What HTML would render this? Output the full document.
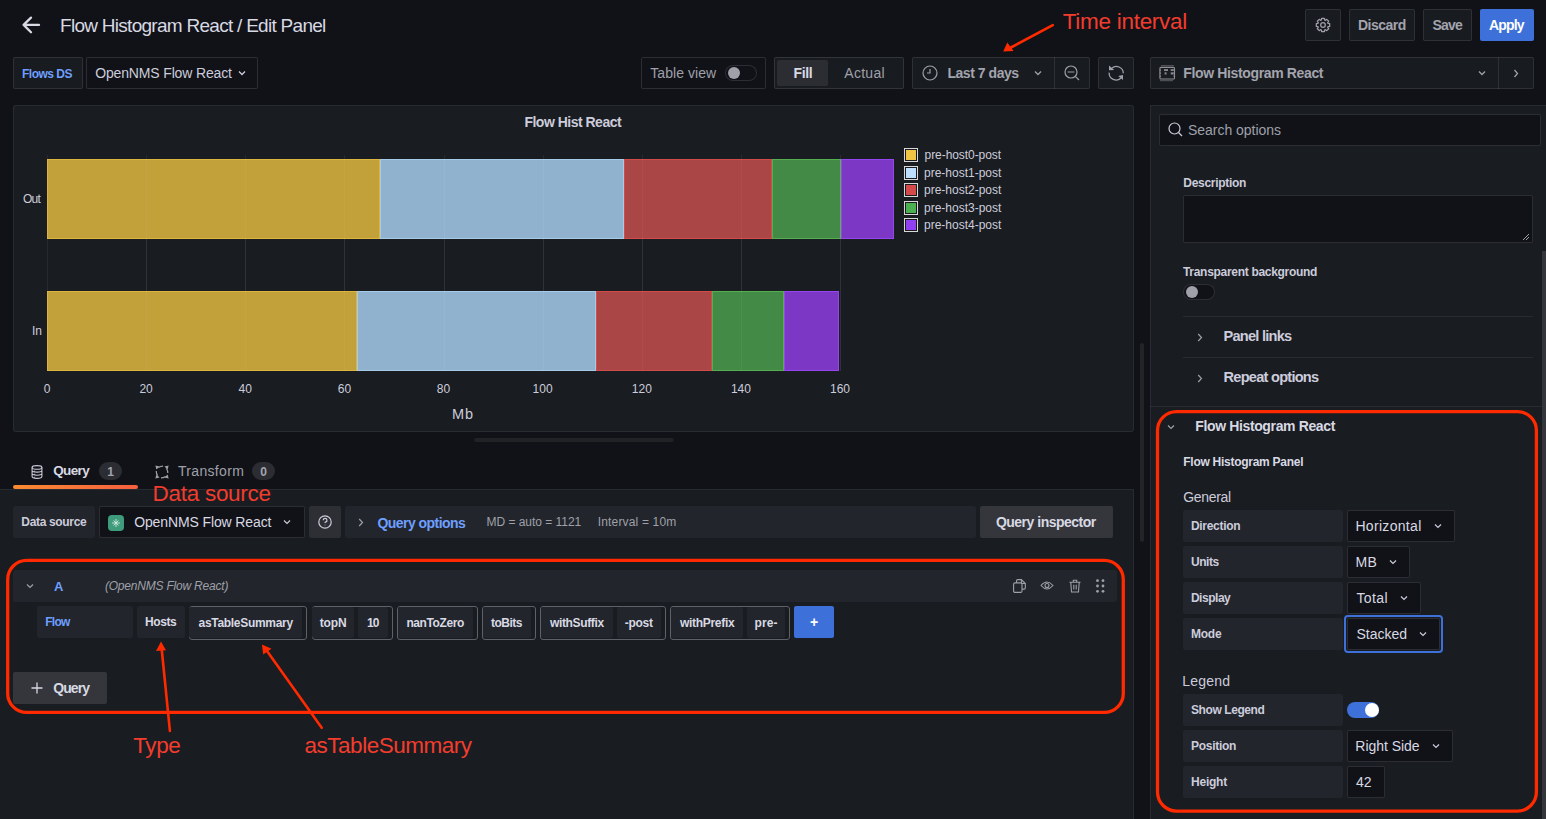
<!DOCTYPE html>
<html><head><meta charset="utf-8">
<style>
*{box-sizing:border-box;margin:0;padding:0}
html,body{width:1546px;height:819px;overflow:hidden;background:#111217;font-family:"Liberation Sans",sans-serif;color:#ccccdc}
.a{position:absolute}
.t{position:absolute;white-space:nowrap;line-height:1}
.b{font-weight:bold}
.btn{position:absolute;border:1px solid rgba(204,204,220,0.12);border-radius:2px;background:#181b1f}
.inp{position:absolute;border:1px solid rgba(204,204,220,0.15);border-radius:2px;background:#111217}
.lbl{position:absolute;background:#22252b;border-radius:2px}
svg{position:absolute;overflow:visible}
.red{color:#ff3b1f}
</style></head><body>

<!-- ===== HEADER ===== -->
<svg style="left:22px;top:17px" width="18" height="16" viewBox="0 0 18 16"><path d="M9 0.6 L1.6 7.9 L9 15.2 M1.6 7.9 H17" fill="none" stroke="#d8d9e3" stroke-width="2.3" stroke-linecap="round" stroke-linejoin="round"/></svg>
<div class="t" style="left:60.0px;top:16px;font-size:19px;color:#d8d9e3;letter-spacing:-0.72px">Flow Histogram React / Edit Panel</div>

<div class="btn" style="left:1305px;top:9px;width:36px;height:32px"></div>
<svg style="left:1315px;top:16.8px" width="16" height="16" viewBox="0 0 16 16"><path d="M6.43 2.94 L6.61 1.34 L9.39 1.34 L9.57 2.94 L10.47 3.31 L11.72 2.32 L13.68 4.28 L12.69 5.53 L13.06 6.43 L14.66 6.61 L14.66 9.39 L13.06 9.57 L12.69 10.47 L13.68 11.72 L11.72 13.68 L10.47 12.69 L9.57 13.06 L9.39 14.66 L6.61 14.66 L6.43 13.06 L5.53 12.69 L4.28 13.68 L2.32 11.72 L3.31 10.47 L2.94 9.57 L1.34 9.39 L1.34 6.61 L2.94 6.43 L3.31 5.53 L2.32 4.28 L4.28 2.32 L5.53 3.31Z" fill="none" stroke="#9fa0aa" stroke-width="1.25" stroke-linejoin="round"/><circle cx="8" cy="8" r="2.3" fill="none" stroke="#9fa0aa" stroke-width="1.25"/></svg>
<div class="btn" style="left:1349px;top:9px;width:66px;height:32px"></div>
<div class="t b" style="left:1358.0px;top:18px;font-size:14px;color:#a3a4ae;letter-spacing:-0.50px">Discard</div>
<div class="btn" style="left:1423px;top:9px;width:49px;height:32px"></div>
<div class="t b" style="left:1432.5px;top:18px;font-size:14px;color:#a3a4ae;letter-spacing:-0.80px">Save</div>
<div class="a" style="left:1480px;top:9px;width:54px;height:32px;background:#3d71d9;border-radius:2px"></div>
<div class="t b" style="left:1489.0px;top:18px;font-size:14px;color:#fff;letter-spacing:-0.85px">Apply</div>

<!-- ===== TOOLBAR ROW ===== -->
<div class="btn" style="left:13px;top:57px;width:70px;height:32px"></div>
<div class="t b" style="left:22.0px;top:68px;font-size:12px;color:#6e9fff;letter-spacing:-0.50px">Flows DS</div>
<div class="inp" style="left:86px;top:57px;width:172px;height:32px;border-color:rgba(204,204,220,0.15)"></div>
<div class="t" style="left:95.2px;top:66px;font-size:14px;color:#ccccdc;letter-spacing:-0.15px">OpenNMS Flow React</div>
<svg style="left:238px;top:70px" width="8" height="6" viewBox="0 0 8 6"><path d="M1 1.5 L4 4.5 L7 1.5" fill="none" stroke="#ccccdc" stroke-width="1.3"/></svg>

<div class="inp" style="left:641px;top:57px;width:125px;height:32px"></div>
<div class="t" style="left:650.3px;top:66px;font-size:14px;color:#9fa0aa;letter-spacing:0.05px">Table view</div>
<div class="a" style="left:725px;top:65px;width:32px;height:16px;border:1px solid rgba(204,204,220,0.15);border-radius:8px;background:#111217"></div>
<div class="a" style="left:728px;top:67px;width:12px;height:12px;border-radius:6px;background:#9fa0aa"></div>

<div class="inp" style="left:774px;top:57px;width:130px;height:32px;background:#181b1f"></div>
<div class="a" style="left:777px;top:60px;width:51px;height:26px;background:#2c2d33;border-radius:2px"></div>
<div class="t b" style="left:793.6px;top:66px;font-size:14px;color:#d8d9e3;letter-spacing:-0.41px">Fill</div>
<div class="t" style="left:844.3px;top:66px;font-size:14px;color:#9fa0aa;letter-spacing:0.28px">Actual</div>

<div class="btn" style="left:912px;top:57px;width:178px;height:32px"></div>
<div class="a" style="left:1054px;top:57px;width:1px;height:32px;background:rgba(204,204,220,0.12)"></div>
<svg style="left:922px;top:65px" width="16" height="16" viewBox="0 0 16 16"><circle cx="8" cy="8" r="7" fill="none" stroke="#9fa0aa" stroke-width="1.2"/><path d="M8 4 V8 H5" fill="none" stroke="#9fa0aa" stroke-width="1.2"/></svg>
<div class="t b" style="left:947.4px;top:66px;font-size:14px;color:#a3a4ae;letter-spacing:-0.45px">Last 7 days</div>
<svg style="left:1034px;top:70px" width="8" height="6" viewBox="0 0 8 6"><path d="M1 1.5 L4 4.5 L7 1.5" fill="none" stroke="#9fa0aa" stroke-width="1.3"/></svg>
<svg style="left:1064px;top:65px" width="16" height="16" viewBox="0 0 16 16"><circle cx="7" cy="7" r="6" fill="none" stroke="#9fa0aa" stroke-width="1.2"/><path d="M3.6 7 H10.4 M11.3 11.3 L15 15" fill="none" stroke="#9fa0aa" stroke-width="1.2"/></svg>
<div class="btn" style="left:1098px;top:57px;width:36px;height:32px"></div>
<svg style="left:1108px;top:65px" width="16" height="16" viewBox="0 0 16 16"><path d="M3.6 3.4 A6.9 6.9 0 0 1 15.3 8.3 M1.2 7.6 A6.9 6.9 0 0 0 13 13" fill="none" stroke="#9fa0aa" stroke-width="1.3"/><polygon points="1,0.5 6.2,4.9 1,5.3" fill="#9fa0aa"/><polygon points="10.2,11 15,15.1 15,10.1" fill="#9fa0aa"/></svg>

<div class="btn" style="left:1150px;top:57px;width:384px;height:32px"></div>
<div class="a" style="left:1498px;top:57px;width:1px;height:32px;background:rgba(204,204,220,0.12)"></div>
<svg style="left:1159px;top:65px" width="16" height="17" viewBox="0 0 16 17"><path d="M2 0.7 H14.8 M1 15.6 H14" stroke="#4d4e54" stroke-width="1.3"/><rect x="0.9" y="2.4" width="14.6" height="11.6" rx="1" fill="none" stroke="#8e8f97" stroke-width="1.1"/><path d="M1.3 4.5 v1.5 M1.3 7.5 v1.5 M1.3 10.5 v1.5 M15 4.5 v1.5 M15 7.5 v1.5 M15 10.5 v1.5" stroke="#8e8f97" stroke-width="0.9"/><rect x="5" y="4.1" width="4" height="1.9" fill="#84858c"/><rect x="11.7" y="4.1" width="3" height="1.9" fill="#84858c"/><rect x="5.6" y="7.3" width="2" height="2.2" fill="#84858c"/><rect x="11.7" y="7.3" width="3" height="2.2" fill="#84858c"/></svg>
<div class="t b" style="left:1183.3px;top:66px;font-size:14px;color:#a3a4ae;letter-spacing:-0.36px">Flow Histogram React</div>
<svg style="left:1478px;top:70px" width="8" height="6" viewBox="0 0 8 6"><path d="M1 1.5 L4 4.5 L7 1.5" fill="none" stroke="#9fa0aa" stroke-width="1.3"/></svg>
<svg style="left:1513px;top:69px" width="6" height="9" viewBox="0 0 6 9"><path d="M1.5 1 L4.5 4.5 L1.5 8" fill="none" stroke="#9fa0aa" stroke-width="1.3"/></svg>


<!-- ===== CHART PANEL ===== -->
<div class="a" style="left:13px;top:105px;width:1121px;height:327px;background:#191c20;border:1px solid rgba(204,204,220,0.09);border-radius:3px"></div>
<div class="t b" style="left:524.4px;top:115px;font-size:14px;color:#ccccdc;letter-spacing:-0.50px">Flow Hist React</div>
<!-- grid -->
<div id="grid"></div>
<div class="a" style="left:47.0px;top:155px;width:1px;height:216px;background:rgba(204,204,220,0.08)"></div><div class="a" style="left:146.1px;top:155px;width:1px;height:216px;background:rgba(204,204,220,0.08)"></div><div class="a" style="left:245.2px;top:155px;width:1px;height:216px;background:rgba(204,204,220,0.08)"></div><div class="a" style="left:344.4px;top:155px;width:1px;height:216px;background:rgba(204,204,220,0.08)"></div><div class="a" style="left:443.5px;top:155px;width:1px;height:216px;background:rgba(204,204,220,0.08)"></div><div class="a" style="left:542.6px;top:155px;width:1px;height:216px;background:rgba(204,204,220,0.08)"></div><div class="a" style="left:641.8px;top:155px;width:1px;height:216px;background:rgba(204,204,220,0.08)"></div><div class="a" style="left:740.9px;top:155px;width:1px;height:216px;background:rgba(204,204,220,0.08)"></div><div class="a" style="left:840.0px;top:155px;width:1px;height:216px;background:rgba(204,204,220,0.08)"></div>
<!-- bars -->
<div class="a" style="left:47px;top:159px;width:333px;height:80px;background:#c2a03a;box-shadow:inset 0 0 0 1px #dcb440"></div><div class="a" style="left:380px;top:159px;width:244px;height:80px;background:#91b2ce;box-shadow:inset 0 0 0 1px #a6cbe8"></div><div class="a" style="left:624px;top:159px;width:147.5px;height:80px;background:#aa4646;box-shadow:inset 0 0 0 1px #d24b4b"></div><div class="a" style="left:771.5px;top:159px;width:69.5px;height:80px;background:#448a47;box-shadow:inset 0 0 0 1px #55af50"></div><div class="a" style="left:841px;top:159px;width:53px;height:80px;background:#7c38c4;box-shadow:inset 0 0 0 1px #9646f0"></div><div class="a" style="left:47px;top:291px;width:310px;height:80px;background:#c2a03a;box-shadow:inset 0 0 0 1px #dcb440"></div><div class="a" style="left:357px;top:291px;width:239px;height:80px;background:#91b2ce;box-shadow:inset 0 0 0 1px #a6cbe8"></div><div class="a" style="left:596px;top:291px;width:116px;height:80px;background:#aa4646;box-shadow:inset 0 0 0 1px #d24b4b"></div><div class="a" style="left:712px;top:291px;width:72px;height:80px;background:#448a47;box-shadow:inset 0 0 0 1px #55af50"></div><div class="a" style="left:784px;top:291px;width:55px;height:80px;background:#7c38c4;box-shadow:inset 0 0 0 1px #9646f0"></div>
<div class="a" style="left:146.1px;top:159px;width:1px;height:212px;background:rgba(255,255,255,0.045)"></div><div class="a" style="left:245.2px;top:159px;width:1px;height:212px;background:rgba(255,255,255,0.045)"></div><div class="a" style="left:344.4px;top:159px;width:1px;height:212px;background:rgba(255,255,255,0.045)"></div><div class="a" style="left:443.5px;top:159px;width:1px;height:212px;background:rgba(255,255,255,0.045)"></div><div class="a" style="left:542.6px;top:159px;width:1px;height:212px;background:rgba(255,255,255,0.045)"></div><div class="a" style="left:641.8px;top:159px;width:1px;height:212px;background:rgba(255,255,255,0.045)"></div><div class="a" style="left:740.9px;top:159px;width:1px;height:212px;background:rgba(255,255,255,0.045)"></div><div class="a" style="left:840.0px;top:159px;width:1px;height:212px;background:rgba(255,255,255,0.045)"></div>
<div class="t" style="left:23.0px;top:193px;font-size:12px;color:#ccccdc;letter-spacing:-0.80px">Out</div>
<div class="t" style="left:32px;top:325px;font-size:12px;color:#ccccdc">In</div>
<div class="t" style="left:17.0px;width:60px;text-align:center;top:383px;font-size:12px;color:#ccccdc">0</div><div class="t" style="left:116.1px;width:60px;text-align:center;top:383px;font-size:12px;color:#ccccdc">20</div><div class="t" style="left:215.2px;width:60px;text-align:center;top:383px;font-size:12px;color:#ccccdc">40</div><div class="t" style="left:314.4px;width:60px;text-align:center;top:383px;font-size:12px;color:#ccccdc">60</div><div class="t" style="left:413.5px;width:60px;text-align:center;top:383px;font-size:12px;color:#ccccdc">80</div><div class="t" style="left:512.6px;width:60px;text-align:center;top:383px;font-size:12px;color:#ccccdc">100</div><div class="t" style="left:611.8px;width:60px;text-align:center;top:383px;font-size:12px;color:#ccccdc">120</div><div class="t" style="left:710.9px;width:60px;text-align:center;top:383px;font-size:12px;color:#ccccdc">140</div><div class="t" style="left:810.0px;width:60px;text-align:center;top:383px;font-size:12px;color:#ccccdc">160</div>
<div class="t" style="left:452.0px;top:407px;font-size:14.5px;color:#ccccdc;letter-spacing:0.92px">Mb</div>
<div class="a" style="left:904px;top:148.0px;width:14px;height:14px;border:1px solid #d8d8d8;background:#f2c444;box-shadow:inset 0 0 0 1px #181b1f"></div><div class="t" style="left:924.6px;top:149.0px;font-size:12px;color:#ccccdc;letter-spacing:-0.07px">pre-host0-post</div><div class="a" style="left:904px;top:165.5px;width:14px;height:14px;border:1px solid #d8d8d8;background:#bfdfff;box-shadow:inset 0 0 0 1px #181b1f"></div><div class="t" style="left:924px;top:166.5px;font-size:12px;color:#ccccdc">pre-host1-post</div><div class="a" style="left:904px;top:183.0px;width:14px;height:14px;border:1px solid #d8d8d8;background:#d44a4a;box-shadow:inset 0 0 0 1px #181b1f"></div><div class="t" style="left:924px;top:184.0px;font-size:12px;color:#ccccdc">pre-host2-post</div><div class="a" style="left:904px;top:200.5px;width:14px;height:14px;border:1px solid #d8d8d8;background:#4caf50;box-shadow:inset 0 0 0 1px #181b1f"></div><div class="t" style="left:924px;top:201.5px;font-size:12px;color:#ccccdc">pre-host3-post</div><div class="a" style="left:904px;top:218.0px;width:14px;height:14px;border:1px solid #d8d8d8;background:#9040f0;box-shadow:inset 0 0 0 1px #181b1f"></div><div class="t" style="left:924px;top:219.0px;font-size:12px;color:#ccccdc">pre-host4-post</div>
<div class="a" style="left:474px;top:438px;width:200px;height:4px;border-radius:2px;background:#202226"></div>


<!-- ===== QUERY TABS ===== -->
<svg style="left:31px;top:465px" width="12" height="14" viewBox="0 0 12 14"><ellipse cx="6" cy="2.4" rx="4.9" ry="1.8" fill="none" stroke="#ccccdc" stroke-width="1.1"/><path d="M1.1 2.4 V11.6 Q1.1 13.4 6 13.4 Q10.9 13.4 10.9 11.6 V2.4 M1.1 5.5 Q1.1 7.1 6 7.1 Q10.9 7.1 10.9 5.5 M1.1 8.6 Q1.1 10.2 6 10.2 Q10.9 10.2 10.9 8.6" fill="none" stroke="#ccccdc" stroke-width="1.1"/><path d="M2.8 6.2 h1.4 M2.8 9.3 h1.4 M2.8 12.3 h1.4" stroke="#ccccdc" stroke-width="0.9"/></svg>
<div class="t b" style="left:53.2px;top:463.5px;font-size:13.5px;color:#d8d9e3;letter-spacing:-0.63px">Query</div>
<div class="a" style="left:99px;top:462px;width:23px;height:18px;border-radius:9px;background:#2c2d33"></div>
<div class="t b" style="left:99px;top:465.5px;width:23px;text-align:center;font-size:12px;color:#a3a4ae">1</div>
<svg style="left:155px;top:465px" width="14" height="14" viewBox="0 0 14 14"><g transform="rotate(0 7 7)"><polygon points="0.4,0.4 4.6,1.4 1.4,4.6" fill="#9fa0aa"/><path d="M3.5 2.6 Q5.5 1.2 8 1.2" fill="none" stroke="#9fa0aa" stroke-width="1.2"/></g><g transform="rotate(90 7 7)"><polygon points="0.4,0.4 4.6,1.4 1.4,4.6" fill="#9fa0aa"/><path d="M3.5 2.6 Q5.5 1.2 8 1.2" fill="none" stroke="#9fa0aa" stroke-width="1.2"/></g><g transform="rotate(180 7 7)"><polygon points="0.4,0.4 4.6,1.4 1.4,4.6" fill="#9fa0aa"/><path d="M3.5 2.6 Q5.5 1.2 8 1.2" fill="none" stroke="#9fa0aa" stroke-width="1.2"/></g><g transform="rotate(270 7 7)"><polygon points="0.4,0.4 4.6,1.4 1.4,4.6" fill="#9fa0aa"/><path d="M3.5 2.6 Q5.5 1.2 8 1.2" fill="none" stroke="#9fa0aa" stroke-width="1.2"/></g></svg>
<div class="t" style="left:178.0px;top:464px;font-size:14px;color:#9fa0aa;letter-spacing:0.32px">Transform</div>
<div class="a" style="left:252px;top:462px;width:23px;height:18px;border-radius:9px;background:#2c2d33"></div>
<div class="t b" style="left:252px;top:465.5px;width:23px;text-align:center;font-size:12px;color:#a3a4ae">0</div>
<div class="a" style="left:13px;top:485px;width:125px;height:4px;border-radius:2px;background:linear-gradient(90deg,#f98b31,#f55f3e)"></div>

<!-- ===== QUERY EDITOR AREA ===== -->
<div class="a" style="left:0;top:489px;width:1134px;height:340px;background:#191c20;border-top:1px solid rgba(204,204,220,0.09);border-right:1px solid rgba(204,204,220,0.09)"></div>
<div class="lbl" style="left:13px;top:506px;width:82px;height:32px"></div>
<div class="t b" style="left:21.3px;top:516px;font-size:12px;color:#ccccdc;letter-spacing:-0.33px">Data source</div>
<div class="inp" style="left:99px;top:506px;width:206px;height:32px"></div>
<div class="a" style="left:108px;top:515px;width:16px;height:16px;border-radius:4px;background:#3e9b7b"></div>
<svg style="left:108px;top:515px" width="16" height="16" viewBox="0 0 16 16"><path d="M4 8 H12 M8 4 V12 M5.5 5.5 L10.5 10.5 M10.5 5.5 L5.5 10.5" stroke="#cfe9df" stroke-width="0.9"/></svg>
<div class="t" style="left:134.2px;top:515px;font-size:14px;color:#d8d9e3;letter-spacing:-0.12px">OpenNMS Flow React</div>
<svg style="left:283px;top:519px" width="8" height="6" viewBox="0 0 8 6"><path d="M1 1.5 L4 4.5 L7 1.5" fill="none" stroke="#ccccdc" stroke-width="1.2"/></svg>
<div class="a" style="left:309px;top:506px;width:32px;height:32px;border-radius:2px;background:#2d2f34"></div>
<svg style="left:317px;top:514px" width="16" height="16" viewBox="0 0 16 16"><circle cx="8" cy="8" r="6.2" fill="none" stroke="#ccccdc" stroke-width="1.2"/><path d="M6.2 6.3 A1.9 1.9 0 1 1 8.4 8.1 Q8 8.3 8 9 M8 10.8 V11.3" fill="none" stroke="#ccccdc" stroke-width="1.2"/></svg>
<div class="lbl" style="left:345px;top:506px;width:631px;height:32px"></div>
<svg style="left:358px;top:518px" width="6" height="9" viewBox="0 0 6 9"><path d="M1.2 1 L4.5 4.5 L1.2 8" fill="none" stroke="#9fa0aa" stroke-width="1.2"/></svg>
<div class="t b" style="left:377.4px;top:515.7px;font-size:14px;color:#6e9fff;letter-spacing:-0.54px">Query options</div>
<div class="t" style="left:486.5px;top:516px;font-size:12px;color:#9fa0aa;letter-spacing:-0.03px">MD = auto = 1121</div>
<div class="t" style="left:597.8px;top:516px;font-size:12px;color:#9fa0aa;letter-spacing:0.16px">Interval = 10m</div>
<div class="a" style="left:980px;top:506px;width:133px;height:32px;border-radius:2px;background:#34363c"></div>
<div class="t b" style="left:995.9px;top:515px;font-size:14px;color:#d8d9e3;letter-spacing:-0.50px">Query inspector</div>
<div class="a" style="left:1140px;top:343px;width:4px;height:199px;border-radius:2px;background:#222428"></div>

<!-- query row -->
<div class="lbl" style="left:13px;top:570px;width:1104px;height:32px"></div>
<svg style="left:26px;top:583px" width="8" height="6" viewBox="0 0 8 6"><path d="M1 1.5 L4 4.5 L7 1.5" fill="none" stroke="#9fa0aa" stroke-width="1.2"/></svg>
<div class="t b" style="left:54px;top:580px;font-size:13px;color:#6e9fff">A</div>
<div class="t" style="left:104.9px;top:580px;font-size:12px;font-style:italic;color:#9fa0aa;letter-spacing:-0.20px">(OpenNMS Flow React)</div>
<svg style="left:1013px;top:579px" width="13" height="14" viewBox="0 0 13 14"><path d="M3.6 3.9 V1.7 Q3.6 0.6 4.7 0.6 H8.4 L12.3 4.5 V9 Q12.3 10.1 11.2 10.1 H9" fill="none" stroke="#9fa0aa" stroke-width="1.1" stroke-linejoin="round"/><path d="M8.4 0.6 V3.3 Q8.4 4.5 9.6 4.5 H12.3" fill="none" stroke="#9fa0aa" stroke-width="1.1"/><rect x="0.6" y="3.9" width="8.4" height="9.5" rx="1.4" fill="#22252b" stroke="#9fa0aa" stroke-width="1.1"/></svg>
<svg style="left:1040px;top:580px" width="14" height="11" viewBox="0 0 14 11"><path d="M1 5.5 Q7 -1.5 13 5.5 Q7 12.5 1 5.5z" fill="none" stroke="#9fa0aa" stroke-width="1.1"/><circle cx="7" cy="5.5" r="2" fill="none" stroke="#9fa0aa" stroke-width="1.1"/></svg>
<svg style="left:1069px;top:579px" width="12" height="14" viewBox="0 0 12 14"><path d="M.5 3.2 H11.5 M4.3 3 V1.3 H7.7 V3 M1.8 3.4 L2.5 13 H9.5 L10.2 3.4 M4.8 5.8 V10.6 M7.2 5.8 V10.6" fill="none" stroke="#9fa0aa" stroke-width="1.1"/></svg>
<svg style="left:1096px;top:579px" width="9" height="14" viewBox="0 0 9 14"><circle cx="1.5" cy="1.7" r="1.4" fill="#9fa0aa"/><circle cx="7" cy="1.7" r="1.4" fill="#9fa0aa"/><circle cx="1.5" cy="7" r="1.4" fill="#9fa0aa"/><circle cx="7" cy="7" r="1.4" fill="#9fa0aa"/><circle cx="1.5" cy="12.3" r="1.4" fill="#9fa0aa"/><circle cx="7" cy="12.3" r="1.4" fill="#9fa0aa"/></svg>

<div class="lbl" style="left:37px;top:606px;width:96px;height:32px"></div>
<div class="t b" style="left:45.3px;top:616px;font-size:12px;color:#6e9fff;letter-spacing:-0.76px">Flow</div>
<div class="lbl" style="left:137px;top:606px;width:48px;height:32px"></div>
<div class="t b" style="left:145.0px;top:616px;font-size:12px;color:#d8d9e3;letter-spacing:-0.42px">Hosts</div>
<div class="a" style="left:189px;top:606px;width:118px;height:34px;border:1px solid #5f6068;border-radius:3px;background:#191c20"></div><div class="a" style="left:189px;top:607px;width:113px;height:31px;border-radius:2px;background:#22252b"></div><div class="t b" style="left:198.6px;top:617px;font-size:12px;color:#d8d9e3;letter-spacing:-0.31px">asTableSummary</div><div class="a" style="left:311.5px;top:606px;width:81.0px;height:34px;border:1px solid #5f6068;border-radius:3px;background:#191c20"></div><div class="a" style="left:312px;top:607px;width:42px;height:31px;border-radius:2px;background:#22252b"></div><div class="t b" style="left:319.7px;top:617px;font-size:12px;color:#d8d9e3;letter-spacing:-0.12px">topN</div><div class="a" style="left:358px;top:607px;width:30px;height:31px;border-radius:2px;background:#22252b"></div><div class="t b" style="left:367.0px;top:617px;font-size:12px;color:#d8d9e3;letter-spacing:-0.87px">10</div><div class="a" style="left:397px;top:606px;width:80.5px;height:34px;border:1px solid #5f6068;border-radius:3px;background:#191c20"></div><div class="a" style="left:398px;top:607px;width:75px;height:31px;border-radius:2px;background:#22252b"></div><div class="t b" style="left:406.4px;top:617px;font-size:12px;color:#d8d9e3;letter-spacing:-0.40px">nanToZero</div><div class="a" style="left:482px;top:606px;width:53.5px;height:34px;border:1px solid #5f6068;border-radius:3px;background:#191c20"></div><div class="a" style="left:483px;top:607px;width:48px;height:31px;border-radius:2px;background:#22252b"></div><div class="t b" style="left:491.0px;top:617px;font-size:12px;color:#d8d9e3;letter-spacing:-0.50px">toBits</div><div class="a" style="left:540px;top:606px;width:125.5px;height:34px;border:1px solid #5f6068;border-radius:3px;background:#191c20"></div><div class="a" style="left:541px;top:607px;width:72px;height:31px;border-radius:2px;background:#22252b"></div><div class="t b" style="left:550.0px;top:617px;font-size:12px;color:#d8d9e3;letter-spacing:-0.35px">withSuffix</div><div class="a" style="left:617px;top:607px;width:44px;height:31px;border-radius:2px;background:#22252b"></div><div class="t b" style="left:624.8px;top:617px;font-size:12px;color:#d8d9e3;letter-spacing:-0.28px">-post</div><div class="a" style="left:670px;top:606px;width:120px;height:34px;border:1px solid #5f6068;border-radius:3px;background:#191c20"></div><div class="a" style="left:671px;top:607px;width:72px;height:31px;border-radius:2px;background:#22252b"></div><div class="t b" style="left:680.0px;top:617px;font-size:12px;color:#d8d9e3;letter-spacing:-0.30px">withPrefix</div><div class="a" style="left:747px;top:607px;width:38px;height:31px;border-radius:2px;background:#22252b"></div><div class="t b" style="left:754.6px;top:617px;font-size:12px;color:#d8d9e3;letter-spacing:0.04px">pre-</div>
<div class="a" style="left:794px;top:606px;width:40px;height:32px;border-radius:2px;background:#3d71d9"></div>
<div class="t b" style="left:794px;top:615px;width:40px;text-align:center;font-size:14px;color:#fff">+</div>

<div class="a" style="left:13px;top:672px;width:94px;height:32px;border-radius:2px;background:#34363c"></div>
<svg style="left:31px;top:682px" width="12" height="12" viewBox="0 0 12 12"><path d="M6 .5 V11.5 M.5 6 H11.5" stroke="#d8d9e3" stroke-width="1.3"/></svg>
<div class="t b" style="left:53.2px;top:681px;font-size:14px;color:#d8d9e3;letter-spacing:-0.92px">Query</div>


<!-- ===== OPTIONS PANE ===== -->
<div class="a" style="left:1150px;top:105px;width:396px;height:714px;background:#191c20;border-left:1px solid rgba(204,204,220,0.09);border-top:1px solid rgba(204,204,220,0.09)"></div>
<div class="inp" style="left:1159px;top:114px;width:382px;height:32px"></div>
<svg style="left:1168px;top:122px" width="15" height="15" viewBox="0 0 15 15"><circle cx="6.5" cy="6.5" r="5.5" fill="none" stroke="#ccccdc" stroke-width="1.2"/><path d="M10.5 10.5 L14 14" stroke="#ccccdc" stroke-width="1.2"/></svg>
<div class="t" style="left:1188.0px;top:123px;font-size:14px;color:#9fa0aa;letter-spacing:-0.03px">Search options</div>
<div class="t b" style="left:1183.3px;top:177px;font-size:12px;color:#ccccdc;letter-spacing:-0.30px">Description</div>
<div class="inp" style="left:1183px;top:195px;width:350px;height:48px"></div>
<svg style="left:1522px;top:233px" width="8" height="8" viewBox="0 0 8 8"><path d="M1 7 L7 1 M4 7 L7 4" stroke="#9fa0aa" stroke-width="1"/></svg>
<div class="t b" style="left:1183.0px;top:266px;font-size:12px;color:#ccccdc;letter-spacing:-0.30px">Transparent background</div>
<div class="a" style="left:1183px;top:284px;width:32px;height:16px;border:1px solid rgba(204,204,220,0.15);border-radius:8px;background:#111217"></div>
<div class="a" style="left:1186px;top:286px;width:12px;height:12px;border-radius:6px;background:#9fa0aa"></div>
<div class="a" style="left:1183px;top:316px;width:350px;height:1px;background:rgba(204,204,220,0.09)"></div>
<svg style="left:1197px;top:333px" width="6" height="9" viewBox="0 0 6 9"><path d="M1.2 1 L4.5 4.5 L1.2 8" fill="none" stroke="#9fa0aa" stroke-width="1.2"/></svg>
<div class="t b" style="left:1223.5px;top:328.5px;font-size:14.6px;color:#ccccdc;letter-spacing:-0.76px">Panel links</div>
<div class="a" style="left:1183px;top:357px;width:350px;height:1px;background:rgba(204,204,220,0.09)"></div>
<svg style="left:1197px;top:374px" width="6" height="9" viewBox="0 0 6 9"><path d="M1.2 1 L4.5 4.5 L1.2 8" fill="none" stroke="#9fa0aa" stroke-width="1.2"/></svg>
<div class="t b" style="left:1223.5px;top:369.5px;font-size:14.6px;color:#ccccdc;letter-spacing:-0.75px">Repeat options</div>
<div class="a" style="left:1150px;top:406px;width:392px;height:1px;background:rgba(204,204,220,0.09)"></div>
<div class="a" style="left:1542px;top:251px;width:4px;height:568px;background:#34363c"></div>

<svg style="left:1167px;top:424px" width="8" height="6" viewBox="0 0 8 6"><path d="M1 1.5 L4 4.5 L7 1.5" fill="none" stroke="#9fa0aa" stroke-width="1.2"/></svg>
<div class="t b" style="left:1195.3px;top:419px;font-size:14px;color:#d8d9e3;letter-spacing:-0.37px">Flow Histogram React</div>
<div class="t b" style="left:1183.3px;top:456px;font-size:12px;color:#d8d9e3;letter-spacing:-0.27px">Flow Histogram Panel</div>
<div class="t" style="left:1183.2px;top:490px;font-size:14px;color:#ccccdc;letter-spacing:-0.32px">General</div>
<div class="lbl" style="left:1183px;top:510px;width:160px;height:32px"></div><div class="t b" style="left:1190.9px;top:520px;font-size:12px;color:#ccccdc;letter-spacing:-0.28px">Direction</div><div class="inp" style="left:1347px;top:510px;width:108px;height:32px"></div><div class="t" style="left:1355.4px;top:519px;font-size:14px;color:#d8d9e3;letter-spacing:0.32px">Horizontal</div><svg style="left:1434px;top:523px" width="8" height="6" viewBox="0 0 8 6"><path d="M1 1.5 L4 4.5 L7 1.5" fill="none" stroke="#ccccdc" stroke-width="1.2"/></svg><div class="lbl" style="left:1183px;top:546px;width:160px;height:32px"></div><div class="t b" style="left:1190.9px;top:556px;font-size:12px;color:#ccccdc;letter-spacing:-0.43px">Units</div><div class="inp" style="left:1347px;top:546px;width:63px;height:32px"></div><div class="t" style="left:1355.4px;top:555px;font-size:14px;color:#d8d9e3;letter-spacing:0.54px">MB</div><svg style="left:1389px;top:559px" width="8" height="6" viewBox="0 0 8 6"><path d="M1 1.5 L4 4.5 L7 1.5" fill="none" stroke="#ccccdc" stroke-width="1.2"/></svg><div class="lbl" style="left:1183px;top:582px;width:160px;height:32px"></div><div class="t b" style="left:1190.9px;top:592px;font-size:12px;color:#ccccdc;letter-spacing:-0.47px">Display</div><div class="inp" style="left:1347px;top:582px;width:74px;height:32px"></div><div class="t" style="left:1356.4px;top:591px;font-size:14px;color:#d8d9e3;letter-spacing:0.43px">Total</div><svg style="left:1400px;top:595px" width="8" height="6" viewBox="0 0 8 6"><path d="M1 1.5 L4 4.5 L7 1.5" fill="none" stroke="#ccccdc" stroke-width="1.2"/></svg><div class="lbl" style="left:1183px;top:618px;width:160px;height:32px"></div><div class="t b" style="left:1190.9px;top:628px;font-size:12px;color:#ccccdc;letter-spacing:-0.19px">Mode</div><div class="a" style="left:1344px;top:615px;width:99px;height:38px;border:2px solid #3d71d9;border-radius:4px"></div><div class="inp" style="left:1347px;top:618px;width:93px;height:32px"></div><div class="t" style="left:1356.4px;top:627px;font-size:14px;color:#d8d9e3;letter-spacing:0.02px">Stacked</div><svg style="left:1419px;top:631px" width="8" height="6" viewBox="0 0 8 6"><path d="M1 1.5 L4 4.5 L7 1.5" fill="none" stroke="#ccccdc" stroke-width="1.2"/></svg><div class="lbl" style="left:1183px;top:694px;width:160px;height:32px"></div><div class="t b" style="left:1191.0px;top:704px;font-size:12px;color:#ccccdc;letter-spacing:-0.42px">Show Legend</div><div class="a" style="left:1347px;top:702px;width:32px;height:16px;border-radius:8px;background:#3d71d9"></div><div class="a" style="left:1365px;top:703px;width:14px;height:14px;border-radius:7px;background:#fff"></div><div class="lbl" style="left:1183px;top:730px;width:160px;height:32px"></div><div class="t b" style="left:1191.0px;top:740px;font-size:12px;color:#ccccdc;letter-spacing:-0.29px">Position</div><div class="inp" style="left:1347px;top:730px;width:106px;height:32px"></div><div class="t" style="left:1355.3px;top:739px;font-size:14px;color:#d8d9e3;letter-spacing:-0.03px">Right Side</div><svg style="left:1432px;top:743px" width="8" height="6" viewBox="0 0 8 6"><path d="M1 1.5 L4 4.5 L7 1.5" fill="none" stroke="#ccccdc" stroke-width="1.2"/></svg><div class="lbl" style="left:1183px;top:766px;width:160px;height:32px"></div><div class="t b" style="left:1191.0px;top:776px;font-size:12px;color:#ccccdc;letter-spacing:-0.23px">Height</div><div class="inp" style="left:1347px;top:766px;width:38px;height:32px"></div><div class="t" style="left:1355.9px;top:775px;font-size:14px;color:#d8d9e3;letter-spacing:0.11px">42</div>
<div class="t" style="left:1182.2px;top:674px;font-size:14px;color:#ccccdc;letter-spacing:0.21px">Legend</div>

<!-- ===== ANNOTATIONS ===== -->
<svg style="left:0;top:0" width="1546" height="819" viewBox="0 0 1546 819">
<g stroke="#ff2a00" stroke-width="3.3" fill="none">
<rect x="7.7" y="560.4" width="1115.6" height="152" rx="19" ry="19"/>
<rect x="1157.5" y="411.6" width="378.9" height="399.5" rx="19" ry="19"/>
</g>
<g stroke="#ff2a00" stroke-width="2.6" fill="none" stroke-linecap="round">
<path d="M1052.8 25.1 L1010 48"/>
<path d="M169.9 730.9 L161.8 650"/>
<path d="M321.7 727.8 L267 651"/>
</g>
<g fill="#ff2a00">
<polygon points="1003.2,51.6 1007.3,42.6 1013.6,51.0"/>
<polygon points="161,641.6 156,651 166,650.2"/>
<polygon points="261.9,644.5 263.2,654.6 271.5,648.7"/>
</g>
</svg>
<div class="t" style="left:1062.7px;top:11.1px;font-size:22.5px;color:#f23c2e;letter-spacing:-0.28px">Time interval</div>
<div class="t" style="left:152.6px;top:483px;font-size:22.5px;color:#f23c2e;letter-spacing:-0.29px">Data source</div>
<div class="t" style="left:133.3px;top:734.8px;font-size:22.5px;color:#f23c2e;letter-spacing:-0.46px">Type</div>
<div class="t" style="left:304.6px;top:735px;font-size:22.5px;color:#f23c2e;letter-spacing:-0.50px">asTableSummary</div>

</body></html>
